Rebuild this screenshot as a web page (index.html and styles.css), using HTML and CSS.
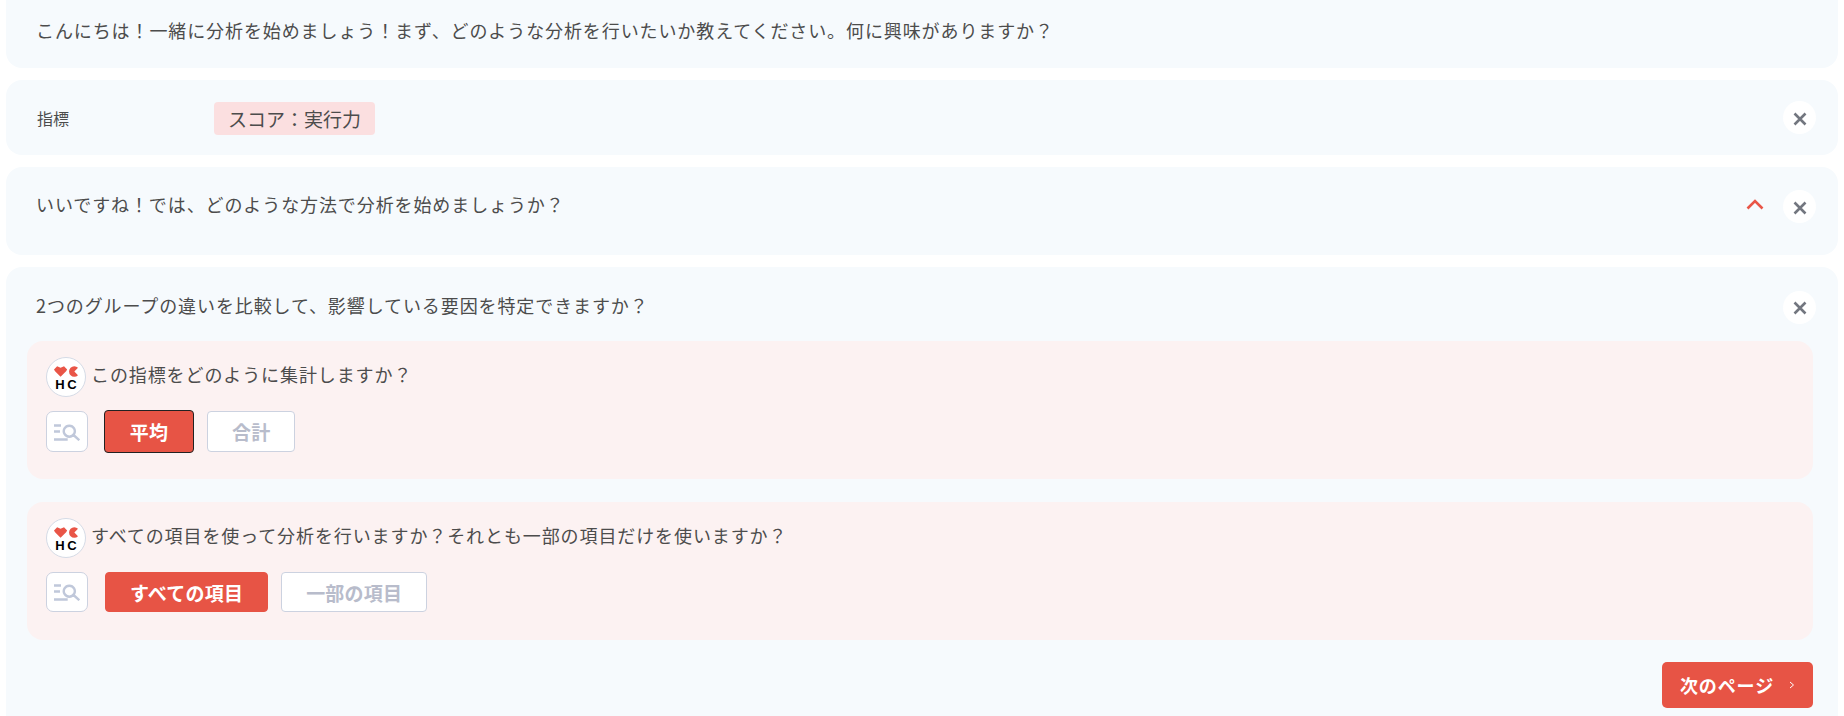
FILE: index.html
```html
<!DOCTYPE html>
<html>

<head>
    <meta charset="utf-8">
    <meta name="viewport" content="width=device-width">
    <title>分析</title>
    <link rel="stylesheet" href="styles.css">
</head>

<body>
    <div class="card card-top">
        <p class="message">こんにちは！一緒に分析を始めましょう！まず、どのような分析を行いたいか教えてください。何に興味がありますか？</p>
    </div>

    <div class="card card-metric">
        <span class="metric-label">指標</span>
        <span class="tag">スコア：実行力</span>
        <button class="close">
            <svg width="14" height="14" viewBox="0 0 14 14"><path d="M1.5 1.5l11 11M12.5 1.5l-11 11" /></svg>
        </button>
    </div>

    <div class="card card-answer">
        <p class="message">いいですね！では、どのような方法で分析を始めましょうか？</p>
        <svg class="chevron" width="18" height="11" viewBox="0 0 18 11"><path d="M1.5 9.500l7.500-7.500 7.500 7.500" /></svg>
        <button class="close">
            <svg width="14" height="14" viewBox="0 0 14 14"><path d="M1.5 1.5l11 11M12.5 1.5l-11 11" /></svg>
        </button>
    </div>

    <div class="card card-main">
        <div class="main-head">
            <p class="message">2つのグループの違いを比較して、影響している要因を特定できますか？</p>
            <button class="close">
                <svg width="14" height="14" viewBox="0 0 14 14"><path d="M1.5 1.5l11 11M12.5 1.5l-11 11" /></svg>
            </button>
        </div>

        <div class="panel">
            <div class="question">
                <div class="logo">
                    <svg width="24" height="11" viewBox="0 0 23 10">
                        <path class="logo-red" d="M0 3l3-3 3.300 1.500 3.300-1.500 3 3-1 1.800-5.300 5.200-5.300-5.200z" />
                        <path class="logo-red" d="M23 1.500a5 5 0 1 0 0 7l-3.500-3.500z" />
                    </svg>
                    <span class="logo-text">HC</span>
                </div>
                <span>この指標をどのように集計しますか？</span>
            </div>
            <div class="options">
                <button class="search">
                    <svg width="26" height="18" viewBox="0 0 26 18"><path d="M0 2.500h7M0 8.500h6M0 16.500h13.700M15.300 2.700a5.500 5.500 0 1 1-.01 0M19.500 12l5.800 5.200" /></svg>
                </button>
                <button class="option selected focused">平均</button>
                <button class="option">合計</button>
            </div>
        </div>

        <div class="panel">
            <div class="question">
                <div class="logo">
                    <svg width="24" height="11" viewBox="0 0 23 10">
                        <path class="logo-red" d="M0 3l3-3 3.300 1.500 3.300-1.500 3 3-1 1.800-5.300 5.200-5.300-5.200z" />
                        <path class="logo-red" d="M23 1.500a5 5 0 1 0 0 7l-3.500-3.500z" />
                    </svg>
                    <span class="logo-text">HC</span>
                </div>
                <span>すべての項目を使って分析を行いますか？それとも一部の項目だけを使いますか？</span>
            </div>
            <div class="options">
                <button class="search">
                    <svg width="26" height="18" viewBox="0 0 26 18"><path d="M0 2.500h7M0 8.500h6M0 16.500h13.700M15.300 2.700a5.500 5.500 0 1 1-.01 0M19.500 12l5.800 5.200" /></svg>
                </button>
                <button class="option selected">すべての項目</button>
                <button class="option">一部の項目</button>
            </div>
        </div>

        <div class="footer">
            <button class="next">
                次のページ
                <svg width="6" height="8" viewBox="0 0 6 8"><path d="M1 1l3.500 3-3.500 3" /></svg>
            </button>
        </div>
    </div>
</body>

</html>
```

FILE: styles.css
```css
html,
body {
    height: 716px;
    overflow: hidden;
}

body {
    margin: 0;
    padding: 0 6px;
    background-color: white;
    color: #4c4c4c;
    font-family: "Noto Sans CJK JP", "Noto Sans", sans-serif;
    font-size: 18px;
    letter-spacing: 0.9px;
}

button {
    font-family: inherit;
    letter-spacing: inherit;
    padding: 0;
    cursor: pointer;
}

.card {
    background-color: #f6fafd;
    border-radius: 16px;
    margin-bottom: 12px;
    padding: 0 22px 0 30px;
    display: flex;
    align-items: center;
}

.card-top {
    height: 68px;
    border-radius: 0 0 16px 16px;
    align-items: flex-start;
}

.card-top .message {
    margin-top: 18px;
}

.card-metric {
    height: 75px;
}

.card-answer {
    height: 88px;
    align-items: flex-start;
}

.card-answer .message {
    margin-top: 25px;
}

.card-answer .close {
    margin-top: 23px;
}

.card-main {
    display: block;
    height: 470px;
    padding: 0 25px 0 21px;
}

.message {
    margin: 0;
    line-height: 25px;
}

.metric-label {
    width: 177px;
    padding-left: 1px;
    font-size: 16px;
    letter-spacing: 0;
}

.tag {
    background-color: #fbdfe0;
    border-radius: 4px;
    height: 33px;
    line-height: 33px;
    margin-top: 2px;
    padding: 0 14px;
    font-size: 19px;
    letter-spacing: 0;
}

.close {
    width: 33px;
    height: 33px;
    margin-left: auto;
    padding-top: 2px;
    border: none;
    border-radius: 50%;
    background-color: white;
    display: flex;
    align-items: center;
    justify-content: center;
}

.close svg path {
    fill: none;
    stroke: #72767f;
    stroke-width: 2.6;
}

.chevron {
    margin: 32px 0 0 auto;
}

.chevron path {
    fill: none;
    stroke: #e95547;
    stroke-width: 2.6;
}

.chevron + .close {
    margin-left: 19px;
}

.main-head {
    display: flex;
    align-items: center;
    height: 74px;
    padding-left: 9px;
    margin-right: -3px;
}

.main-head .message {
    margin-top: 3px;
}

.main-head .close {
    margin-top: 6px;
}

.panel {
    background-color: #fcf2f2;
    border-radius: 16px;
    height: 138px;
    margin-bottom: 23px;
    padding: 16px 19px;
    box-sizing: border-box;
}

.question {
    display: flex;
    align-items: center;
    gap: 5px;
    height: 34px;
    margin-bottom: 6px;
}

.logo {
    width: 40px;
    height: 40px;
    flex-shrink: 0;
    margin-top: 6px;
    box-sizing: border-box;
    border: 1px solid #d5dbe6;
    border-radius: 50%;
    background-color: white;
    display: flex;
    flex-direction: column;
    align-items: center;
    padding-top: 8px;
}

.logo svg {
    display: block;
    flex-shrink: 0;
}

.logo-red {
    fill: #e95547;
}

.logo-text {
    color: black;
    font-family: "Liberation Sans", sans-serif;
    font-size: 13px;
    font-weight: bold;
    line-height: 14px;
    letter-spacing: 2.500px;
    margin: 1px -2.500px 0 0;
}

.options {
    display: flex;
    align-items: center;
    margin-top: 19px;
}

.panel + .panel .options {
    margin-top: 20px;
}

.panel + .panel .search,
.panel + .panel .option {
    height: 40px;
}

.search {
    width: 42px;
    height: 41px;
    background-color: white;
    border: 1px solid #ccd2e0;
    border-radius: 7px;
    display: flex;
    align-items: center;
    justify-content: center;
    margin-right: 17px;
}

.search svg path {
    fill: none;
    stroke: #c0c8da;
    stroke-width: 2.4;
}

.option {
    min-width: 88px;
    height: 41px;
    padding: 0 24px;
    background-color: white;
    border: 1px solid #ccd2e0;
    border-radius: 4px;
    color: #b8bccb;
    font-size: 19px;
    font-weight: bold;
    letter-spacing: 0.2px;
    margin-right: 13px;
}

.selected {
    background-color: #e75445;
    border-color: #e75445;
    color: white;
}

.focused {
    border-color: #222222;
    min-width: 90px;
    height: 43px;
    margin-left: -1px;
}

.footer {
    display: flex;
    justify-content: flex-end;
    margin-top: -1px;
}

.next {
    width: 151px;
    height: 46px;
    background-color: #e75445;
    border: none;
    border-radius: 5px;
    color: white;
    font-size: 18px;
    font-weight: bold;
    letter-spacing: 0.9px;
    display: flex;
    align-items: center;
    justify-content: center;
    gap: 15px;
}

.next svg path {
    fill: none;
    stroke: white;
    stroke-width: 1;
}
```
